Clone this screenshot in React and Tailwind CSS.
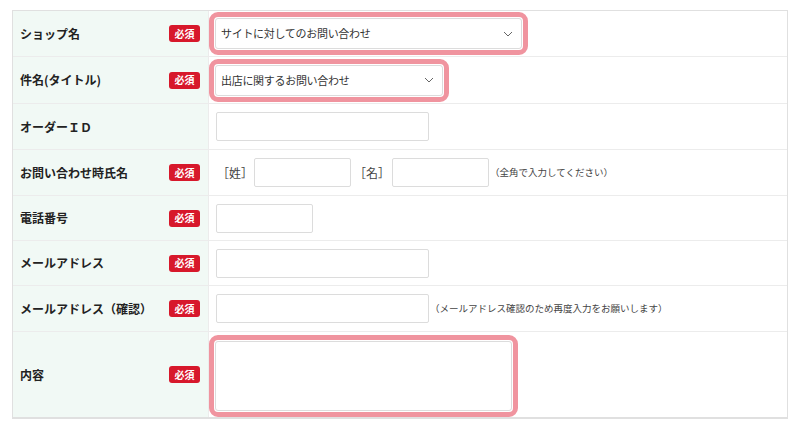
import React from "react";

const font = { fontFamily: '"Noto Sans CJK JP", "Noto Sans", sans-serif' };

function Badge() {
  return (
    <span className="inline-flex items-center justify-center w-[31px] h-[17px] rounded-[3px] bg-[#d7182b] text-white text-[10px] leading-none font-bold">
      必須
    </span>
  );
}

function Chevron() {
  return (
    <svg width="10" height="6" viewBox="0 0 10 6" className="shrink-0">
      <polyline points="1,1 5,5 9,1" fill="none" stroke="#666" strokeWidth="1" />
    </svg>
  );
}

function Row({ label, required, h, children, last }) {
  return (
    <div className={`flex ${h} ${last ? "" : "border-b border-[#ececec]"}`}>
      <div className="w-[196px] shrink-0 bg-[#f1f9f5] border-r border-[#ececec] flex items-center justify-between pl-[7px] pr-[8px]">
        <span className="text-[12px] font-bold text-[#222]">{label}</span>
        {required && <Badge />}
      </div>
      <div className="flex-1 flex items-center">{children}</div>
    </div>
  );
}

function Input({ w }) {
  return <div className={`${w} h-[29px] border border-[#dcdcdc] rounded-[2px] bg-white`} />;
}

function PinkSelect({ w, text }) {
  return (
    <div className={`${w} border-[5px] border-[#f0949f] rounded-[9px] p-px bg-white`}>
      <div className="h-[31px] border border-[#dcdcdc] rounded-[3px] flex items-center justify-between pl-[5px] pr-[8px]">
        <span className="text-[11px] tracking-[-0.3px] text-[#333]">{text}</span>
        <Chevron />
      </div>
    </div>
  );
}

export default function App() {
  return (
    <div className="w-[800px] h-[428px] bg-white pt-[10px] pl-[12px]" style={font}>
      <div className="w-[776px] border border-[#e0e0e0] border-b-2">
        <Row label="ショップ名" required h="h-[46px]">
          <PinkSelect w="w-[319px]" text="サイトに対してのお問い合わせ" />
        </Row>
        <Row label="件名(タイトル)" required h="h-[47px]">
          <PinkSelect w="w-[240px]" text="出店に関するお問い合わせ" />
        </Row>
        <Row label="オーダーＩＤ" h="h-[46px]">
          <div className="pl-[7px]"><Input w="w-[213px]" /></div>
        </Row>
        <Row label="お問い合わせ時氏名" required h="h-[46px]">
          <div className="flex items-center pl-[7px] text-[12px] text-[#444]">
            <span className="pl-[1px] w-[38px]">［姓］</span>
            <Input w="w-[97px]" />
            <span className="ml-[3px] w-[38px]">［名］</span>
            <Input w="w-[97px]" />
            <span className="ml-[1px] text-[9.5px] text-[#444]">（全角で入力してください）</span>
          </div>
        </Row>
        <Row label="電話番号" required h="h-[45px]">
          <div className="pl-[7px]"><Input w="w-[97px]" /></div>
        </Row>
        <Row label="メールアドレス" required h="h-[45px]">
          <div className="pl-[7px]"><Input w="w-[213px]" /></div>
        </Row>
        <Row label="メールアドレス（確認）" required h="h-[46px]">
          <div className="flex items-center pl-[7px]">
            <Input w="w-[213px]" />
            <span className="ml-[1px] text-[9.5px] text-[#444]">（メールアドレス確認のため再度入力をお願いします）</span>
          </div>
        </Row>
        <Row label="内容" required h="h-[85px]" last>
          <div className="self-end w-[309px] h-[82px] border-[5px] border-[#f0949f] rounded-[9px] p-px bg-white">
            <div className="w-full h-full border border-[#dcdcdc] rounded-[3px]" />
          </div>
        </Row>
      </div>
    </div>
  );
}
